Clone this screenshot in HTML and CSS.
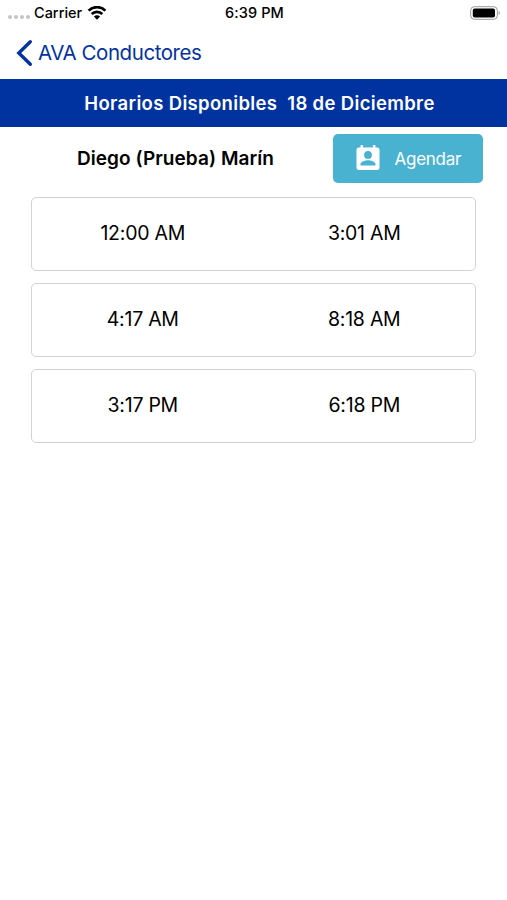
FILE: index.html
```html
<!DOCTYPE html>
<html lang="es">
<head>
    <meta charset="UTF-8">
    <meta name="viewport" content="width=device-width, initial-scale=1.0">
    <title>AVA Conductores</title>
    <link rel="stylesheet" href="styles.css">
</head>
<body>

<!-- Status bar -->
<div class="status-bar">
    <div class="carrier">
        <span class="dots"><i></i><i></i><i></i><i></i></span>
        <span class="carrier-name">Carrier</span>
        <svg class="wifi" width="20" height="14" viewBox="0 0 20 14">
            <path d="M1.6 4.6a12 12 0 0 1 16.8 0M4.7 8a7.6 7.6 0 0 1 10.6 0" fill="none" stroke="#000" stroke-width="2.7"/>
            <path d="M10 13.7L6.9 10.6a4.4 4.4 0 0 1 6.2 0z"/>
        </svg>
    </div>
    <span class="time">6:39 PM</span>
    <svg class="battery" width="31" height="14" viewBox="0 0 31 14">
        <rect x=".7" y=".7" width="26.6" height="12.6" rx="3.6" fill="none" stroke="#999"/>
        <rect x="2.8" y="2.6" width="22.2" height="9" rx="1.8"/>
        <path d="M28.6 5c1.6.6 1.6 3.4 0 4z" fill="#999"/>
    </svg>
</div>

<!-- Navigation -->
<div class="nav-bar">
    <svg width="17" height="28" viewBox="0 0 17 28">
        <path d="M14.3 2.8L2.8 14l11.5 11.2" fill="none" stroke="#0433a0" stroke-width="3.4" stroke-linecap="round"/>
    </svg>
    <a class="back">AVA Conductores</a>
</div>

<div class="title-bar">
    <span class="title">Horarios Disponibles&nbsp; 18 de Diciembre</span>
</div>

<div class="driver-row">
    <span class="driver">Diego (Prueba) Marín</span>
    <button class="btn-agendar">
        <svg width="24" height="26" viewBox="0 0 24 26">
            <path fill="#fff" fill-rule="evenodd" d="M3 2.5h1.5V1a1 1 0 0 1 2.6 0v1.5h9.8V1a1 1 0 0 1 2.6 0v1.5H21a2.5 2.5 0 0 1 2.5 2.5v17.5A2.5 2.5 0 0 1 21 25H3a2.5 2.5 0 0 1-2.5-2.5V5A2.5 2.5 0 0 1 3 2.5zM12 6a3.9 3.9 0 1 0 0 7.8A3.9 3.9 0 0 0 12 6zM4.5 20.5h15v-1.2c0-2.6-5-4-7.5-4s-7.5 1.4-7.5 4z"/>
        </svg>
        <span class="btn-label">Agendar</span>
    </button>
</div>

<!-- Available hours -->
<div class="schedule">
    <div class="slot">
        <span class="hour">12:00 AM</span>
        <span class="hour">3:01 AM</span>
    </div>
    <div class="slot">
        <span class="hour">4:17 AM</span>
        <span class="hour">8:18 AM</span>
    </div>
    <div class="slot">
        <span class="hour">3:17 PM</span>
        <span class="hour">6:18 PM</span>
    </div>
</div>

</body>
</html>
```
FILE: styles.css
```css
* {
    box-sizing: border-box;
}
body {
    margin: 0;
    background-color: #fff;
    color: #000;
    font-family: Inter, "Liberation Sans", sans-serif;
}
.status-bar {
    display: grid;
    grid-template-columns: 1fr auto 1fr;
    align-items: center;
    height: 26px;
    padding: 0 6px 0 8px;
    font-size: 14.5px;
    font-weight: 500;
}
.carrier {
    display: flex;
    align-items: center;
}
.carrier-name,
.time {
    padding-bottom: 1px;
}
.time {
    letter-spacing: 0.1px;
}
.dots {
    display: flex;
    gap: 2px;
    width: 26px;
    padding-top: 8px;
}
.dots i {
    width: 4px;
    height: 4px;
    border-radius: 50%;
    background-color: #c4c4c4;
}
.wifi {
    margin-left: 5px;
}
.battery {
    justify-self: end;
}
.nav-bar {
    display: flex;
    align-items: center;
    gap: 5px;
    height: 53px;
    padding-left: 16px;
}
.back {
    color: #0433a0;
    font-size: 20.5px;
    letter-spacing: -0.45px;
}
.title-bar {
    display: flex;
    align-items: center;
    justify-content: center;
    height: 48px;
    padding-left: 12px;
    background-color: #0033a0;
    color: #fff;
    font-size: 18.5px;
    font-weight: 600;
    letter-spacing: 0.34px;
}
.driver-row {
    display: flex;
    align-items: center;
    justify-content: space-between;
    height: 63px;
    padding: 0 24.5px 0 77px;
}
.driver {
    font-size: 19px;
    font-weight: 600;
    letter-spacing: 0.06px;
}
.btn-agendar {
    display: flex;
    align-items: center;
    gap: 15px;
    width: 150px;
    height: 49px;
    padding: 0 0 0 23px;
    border: 0;
    border-radius: 5px;
    background-color: #4ab2d1;
    color: #fff;
    font-family: inherit;
    font-size: 17px;
    letter-spacing: -0.25px;
}
.btn-agendar svg {
    margin-bottom: 2px;
}
.schedule {
    display: flex;
    flex-direction: column;
    gap: 12px;
    padding: 7px 31px 0;
}
.slot {
    display: grid;
    grid-template-columns: 1fr 1fr;
    align-items: center;
    height: 74px;
    border: 1px solid #d3d3d3;
    border-radius: 5px;
    font-size: 19.5px;
    letter-spacing: -0.25px;
    text-align: center;
}
.hour {
    padding-bottom: 2px;
}
```
